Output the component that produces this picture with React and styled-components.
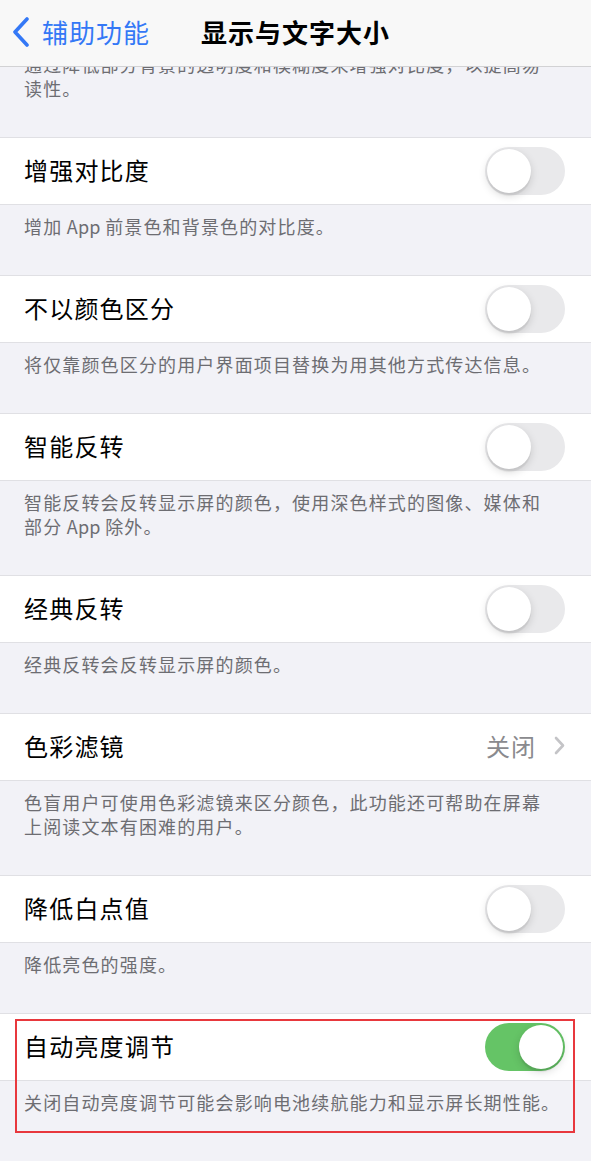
import React from 'react';
import styled, { createGlobalStyle } from 'styled-components';

const GlobalStyle = createGlobalStyle`
  html, body {
    margin: 0;
    padding: 0;
    background: #f2f2f7;
    overflow: hidden;
  }
  body {
    font-family: "Noto Sans CJK SC", "Noto Sans", sans-serif;
    -webkit-font-smoothing: antialiased;
  }
`;

const Page = styled.div`
  position: relative;
  width: 591px;
  height: 1161px;
  overflow: hidden;
  background: #f2f2f7;
`;

const NavBar = styled.header`
  position: absolute;
  top: 0;
  left: 0;
  right: 0;
  height: 67px;
  z-index: 2;
  display: grid;
  grid-template-columns: 1fr auto 1fr;
  align-items: center;
  background: #f8f8f8;
  border-bottom: 1px solid #d2d2d4;
  box-sizing: border-box;
`;

const BackButton = styled.div`
  display: flex;
  align-items: center;
  gap: 12px;
  padding-left: 12px;
  color: #3478f6;
  font-size: 26px;
  letter-spacing: 1px;
  line-height: 1;
  padding-bottom: 2px;
`;

const Title = styled.h1`
  margin: 0;
  font-size: 26px;
  font-weight: 600;
  letter-spacing: 1px;
  color: #000;
  line-height: 1;
  padding-bottom: 2px;
`;

const Content = styled.main`
  padding-top: 43px;
`;

const Row = styled.div`
  box-sizing: border-box;
  height: 68px;
  display: flex;
  align-items: center;
  justify-content: space-between;
  padding: 0 26px 0 24px;
  background: #fff;
  border-top: 1px solid #e0e0e4;
  border-bottom: 1px solid #e0e0e4;
`;

const Label = styled.span`
  font-size: 24px;
  letter-spacing: 1.2px;
  color: #000;
  padding-bottom: 3px;
`;

const Footer = styled.p`
  margin: 0;
  padding: 9px 16px 37px 24px;
  font-size: 18px;
  line-height: 24px;
  letter-spacing: 1.15px;
  color: #6d6d72;
`;

const Latin = styled.span`
  letter-spacing: 0.3px;
`;

const Track = styled.div`
  position: relative;
  width: 80px;
  height: 48px;
  border-radius: 24px;
  background: ${(p) => (p.$on ? '#65c466' : '#e9e9eb')};
`;

const Knob = styled.div`
  position: absolute;
  top: 2px;
  left: ${(p) => (p.$on ? '34px' : '2px')};
  width: 44px;
  height: 44px;
  border-radius: 50%;
  background: #fff;
  box-shadow: 0 3px 8px rgba(0, 0, 0, 0.15), 0 3px 1px rgba(0, 0, 0, 0.06);
`;

const Detail = styled.div`
  display: flex;
  align-items: center;
  gap: 18px;
  color: #8a8a8e;
  font-size: 24px;
  letter-spacing: 1px;
  padding-bottom: 3px;
`;

const Highlight = styled.section`
  position: relative;
`;

const RedFrame = styled.div`
  position: absolute;
  left: 15px;
  right: 16px;
  top: 6px;
  bottom: 18px;
  border: 2px solid #e8383d;
  pointer-events: none;
`;

const Toggle = ({ on }) => (
  <Track $on={on}>
    <Knob $on={on} />
  </Track>
);

const BackChevron = () => (
  <svg width="18" height="30" viewBox="0 0 18 30">
    <path d="M15 2 L3 15 L15 28" fill="none" stroke="#3478f6" strokeWidth="3.6" strokeLinecap="round" strokeLinejoin="round" />
  </svg>
);

const Chevron = () => (
  <svg width="11" height="19" viewBox="0 0 11 19">
    <path d="M2 2 L9 9.5 L2 17" fill="none" stroke="#c4c4c7" strokeWidth="2.6" strokeLinecap="round" strokeLinejoin="round" />
  </svg>
);

const app = <Latin> App </Latin>;

const sections = [
  { label: '增强对比度', footer: [<>增加{app}前景色和背景色的对比度。</>] },
  { label: '不以颜色区分', footer: ['将仅靠颜色区分的用户界面项目替换为用其他方式传达信息。'] },
  { label: '智能反转', footer: ['智能反转会反转显示屏的颜色，使用深色样式的图像、媒体和', <>部分{app}除外。</>] },
  { label: '经典反转', footer: ['经典反转会反转显示屏的颜色。'] },
  { label: '色彩滤镜', detail: '关闭', footer: ['色盲用户可使用色彩滤镜来区分颜色，此功能还可帮助在屏幕', '上阅读文本有困难的用户。'] },
  { label: '降低白点值', footer: ['降低亮色的强度。'] },
];

const FooterText = ({ lines }) => (
  <Footer>
    {lines.map((l, i) => (
      <React.Fragment key={i}>
        {i > 0 && <br />}
        {l}
      </React.Fragment>
    ))}
  </Footer>
);

export default function App() {
  return (
    <Page>
      <GlobalStyle />
      <NavBar>
        <BackButton>
          <BackChevron />
          <span>辅助功能</span>
        </BackButton>
        <Title>显示与文字大小</Title>
        <div />
      </NavBar>
      <Content>
        <FooterText lines={['通过降低部分背景的透明度和模糊度来增强对比度，以提高易', '读性。']} />
        {sections.map((s) => (
          <section key={s.label}>
            <Row>
              <Label>{s.label}</Label>
              {s.detail ? (
                <Detail>
                  {s.detail}
                  <Chevron />
                </Detail>
              ) : (
                <Toggle on={false} />
              )}
            </Row>
            <FooterText lines={s.footer} />
          </section>
        ))}
        <Highlight>
          <Row>
            <Label>自动亮度调节</Label>
            <Toggle on />
          </Row>
          <FooterText lines={['关闭自动亮度调节可能会影响电池续航能力和显示屏长期性能。']} />
          <RedFrame />
        </Highlight>
      </Content>
    </Page>
  );
}
